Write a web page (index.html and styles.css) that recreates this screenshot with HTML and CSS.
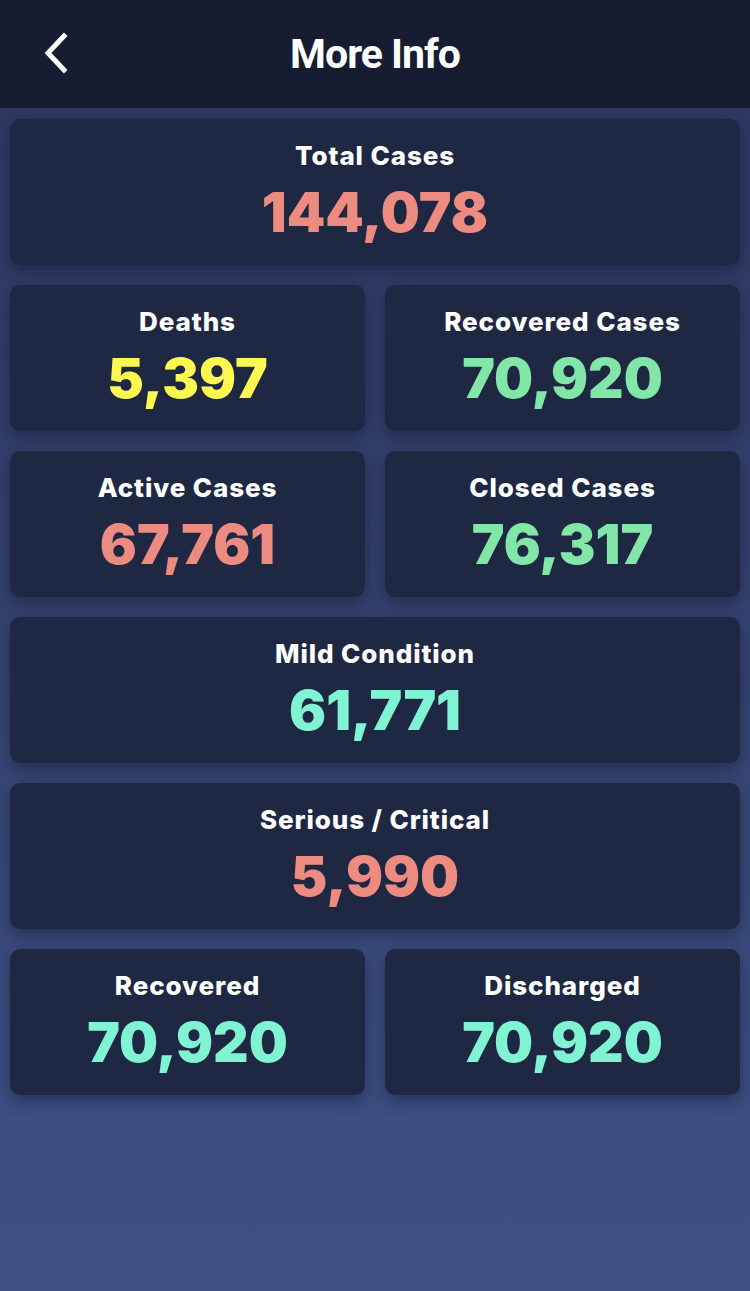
FILE: index.html
```html
<!DOCTYPE html>
<html>
<head>
<meta charset="utf-8">
<link rel="stylesheet" href="styles.css">
</head>
<body>
<header class="topbar">
  <span class="back">
    <svg width="30" height="42" viewBox="0 0 30 42"><polyline points="22,4 6,21 22,38" fill="none" stroke="#fff" stroke-width="5" stroke-linecap="square"/></svg>
  </span>
  <h1 class="title">More Info</h1>
</header>
<main class="content">
  <div class="card wide"><div class="label">Total Cases</div><div class="value coral">144,078</div></div>
  <div class="card"><div class="label">Deaths</div><div class="value yellow">5,397</div></div>
  <div class="card"><div class="label">Recovered Cases</div><div class="value green">70,920</div></div>
  <div class="card"><div class="label">Active Cases</div><div class="value coral">67,761</div></div>
  <div class="card"><div class="label">Closed Cases</div><div class="value green">76,317</div></div>
  <div class="card wide"><div class="label">Mild Condition</div><div class="value mint">61,771</div></div>
  <div class="card wide"><div class="label">Serious / Critical</div><div class="value coral">5,990</div></div>
  <div class="card"><div class="label">Recovered</div><div class="value mint">70,920</div></div>
  <div class="card"><div class="label">Discharged</div><div class="value mint">70,920</div></div>
</main>
</body>
</html>
```
FILE: styles.css
```css
html, body {
  margin: 0;
  padding: 0;
}
body {
  width: 750px;
  min-height: 1291px;
  background: linear-gradient(180deg, #2c3760 0%, #34416f 45%, #3c4e82 85%, #3d4f83 100%);
  font-family: Inter, "Noto Sans", sans-serif;
  color: #fff;
}
.topbar {
  height: 108px;
  background: #161d30;
  display: flex;
  align-items: center;
  justify-content: center;
  position: relative;
}
.back {
  position: absolute;
  left: 42px;
  top: 32px;
  display: flex;
}
.title {
  margin: 0;
  font-family: Roboto, sans-serif;
  font-weight: 700;
  font-size: 41px;
  letter-spacing: -1px;
  color: #fff;
}
.content {
  padding: 11px 10px 0;
  display: grid;
  grid-template-columns: 1fr 1fr;
  gap: 20px;
}
.card {
  background: #1f2843;
  border-radius: 10px;
  height: 146px;
  box-shadow: 0 6px 16px rgba(15, 20, 40, 0.45);
  display: flex;
  flex-direction: column;
  align-items: center;
  padding-top: 21px;
  box-sizing: border-box;
}
.wide {
  grid-column: 1 / 3;
}
.label {
  font-weight: 800;
  font-size: 26px;
  line-height: 32px;
  letter-spacing: 0.9px;
}
.value {
  font-weight: 900;
  font-size: 55px;
  line-height: 62px;
  margin-top: 9px;
  letter-spacing: 0;
}
.coral { color: #ee8b80; }
.yellow { color: #fcf751; }
.green { color: #82e6a9; }
.mint { color: #80f3d2; }
```
